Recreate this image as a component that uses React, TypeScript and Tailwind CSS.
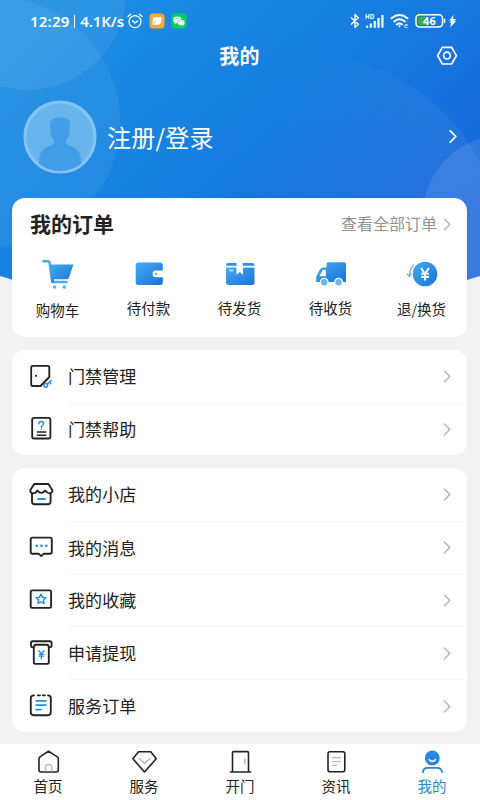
import type { ReactNode } from "react";

const FONT = "font-['Noto_Sans_CJK_SC',sans-serif]";

function Chevron({ className, w = 1.5 }: { className: string; w?: number }) {
  return (
    <svg viewBox="0 0 8 14" className={className} fill="none" stroke="currentColor" strokeWidth={w} strokeLinecap="round" strokeLinejoin="round">
      <path d="M1 1l6 6-6 6" />
    </svg>
  );
}

function HeaderBackground() {
  return (
    <svg viewBox="0 0 480 300" className="absolute left-0 top-0 h-[300px] w-[480px]">
      <defs>
        <linearGradient id="sky" gradientUnits="userSpaceOnUse" x1="60" y1="0" x2="350" y2="330">
          <stop offset="0" stopColor="#1c8fe4" />
          <stop offset="0.45" stopColor="#1680e0" />
          <stop offset="1" stopColor="#1763d9" />
        </linearGradient>
        <clipPath id="arc"><path d="M0 0H480V276Q240 352 0 276Z" /></clipPath>
        <linearGradient id="orb" gradientUnits="userSpaceOnUse" x1="270" y1="110" x2="450" y2="180">
          <stop offset="0" stopColor="#fff" stopOpacity="0" />
          <stop offset="1" stopColor="#fff" stopOpacity="0.06" />
        </linearGradient>
      </defs>
      <g clipPath="url(#arc)">
        <rect width="480" height="300" fill="url(#sky)" />
        <circle cx="28" cy="-8" r="98" fill="#fff" fillOpacity="0.07" />
        <circle cx="-5" cy="122" r="125" fill="#fff" fillOpacity="0.06" />
        <circle cx="300" cy="256" r="203" fill="url(#orb)" />
        <circle cx="502" cy="215" r="79" fill="#fff" fillOpacity="0.1" />
      </g>
    </svg>
  );
}

function StatusBar() {
  return (
    <div className="flex h-[42px] items-center pl-[30px] pr-[23px] text-white">
      <div className="flex w-[94px] items-center whitespace-nowrap font-['Noto_Sans',sans-serif] text-[15px] font-semibold">
        <span className="w-[39px] tracking-[0.2px]">12:29</span>
        <span className="ml-[5px] h-[13px] w-[1.5px] bg-white" />
        <span className="ml-[5px] tracking-[-0.1px]">4.1K/s</span>
      </div>
      <svg viewBox="0 0 16 16" className="ml-[3px] h-4 w-4" fill="none" stroke="currentColor" strokeWidth="1.3" strokeLinecap="round" strokeLinejoin="round">
        <circle cx="8" cy="8.6" r="6" />
        <path d="M1 3.6L3.6 1.2M15 3.6L12.4 1.2M5.6 7.8L8 10l2.6-2" />
      </svg>
      <svg viewBox="0 0 16 16" className="ml-[6px] h-4 w-4">
        <rect x="0.5" y="0.5" width="15" height="15" rx="3.5" fill="#fba734" />
        <path d="M4 4.3h8.7L12.2 9.5l-2.4 2.2H3.4z" fill="#fff" />
        <path d="M3.6 11.4L6.8 7.8" stroke="#fbb95a" strokeWidth="1" />
      </svg>
      <svg viewBox="0 0 16 16" className="ml-[6px] h-4 w-4">
        <rect x="0.5" y="0.5" width="15" height="15" rx="3.5" fill="#08cd63" />
        <ellipse cx="6.3" cy="6.8" rx="4.1" ry="3.4" fill="#fff" />
        <ellipse cx="10.3" cy="9.5" rx="3.7" ry="3" fill="#fff" stroke="#08cd63" strokeWidth="0.6" />
        <path d="M3.5 11l.5-2 2 1zM12 13l-.5-1.5 1.5-.4z" fill="#fff" />
        <g fill="#08cd63">
          <circle cx="5" cy="5.8" r=".6" /><circle cx="7.7" cy="5.8" r=".6" />
          <circle cx="9.2" cy="8.8" r=".5" /><circle cx="11.5" cy="8.8" r=".5" />
        </g>
      </svg>
      <div className="ml-auto flex items-center">
        <svg viewBox="0 0 10 16" className="h-4 w-[10px]" fill="none" stroke="currentColor" strokeWidth="1.4" strokeLinejoin="round">
          <path d="M1 4.4l7.4 6.8L5 14.5v-13l3.4 3.2L1 11.6" />
        </svg>
        <svg viewBox="0 0 20 20" className="ml-[5px] h-5 w-5 overflow-visible" fill="currentColor">
          <text x="0" y="7.6" fontSize="6.2" fontWeight="700" fontFamily="Noto Sans">HD</text>
          <rect x="1" y="14.7" width="2.2" height="2" /><rect x="4.7" y="12.5" width="2.2" height="4.2" />
          <rect x="8.6" y="10" width="2.2" height="6.7" /><rect x="12.4" y="7" width="2.2" height="9.7" />
          <rect x="16.3" y="4" width="2.2" height="12.7" />
        </svg>
        <svg viewBox="0 0 20 16" className="ml-[5px] h-4 w-5" fill="none" stroke="currentColor" strokeWidth="1.9" strokeLinecap="round">
          <path d="M1.5 5.2Q9.5-1.3 17.5 5.2M4.2 8.4Q9.5 4.2 14.8 8.4M6.8 11.5Q9.5 9.5 12 11.5" />
          <circle cx="9.5" cy="13.2" r="1" fill="currentColor" stroke="none" />
          <text x="14" y="15.2" fontSize="7" fill="currentColor" stroke="none" fontFamily="Noto Sans">e</text>
        </svg>
        <svg viewBox="0 0 32 16" className="ml-[5px] h-4 w-8">
          <rect x="1" y="1.8" width="26.5" height="12.2" rx="3.5" fill="none" stroke="#fff" strokeWidth="1.5" />
          <path d="M5 3.8H11.5V12H5Q3.2 12 3.2 10.2V5.6Q3.2 3.8 5 3.8Z" fill="#3fae3a" />
          <rect x="28.8" y="5.5" width="1.5" height="4.8" rx=".7" fill="#fff" />
          <text x="14.4" y="12" fontSize="11" fontWeight="700" textAnchor="middle" fill="#fff" fontFamily="Noto Sans">46</text>
        </svg>
        <svg viewBox="0 0 9 14" className="ml-[1px] h-[14px] w-[9px]" fill="currentColor">
          <path d="M5.8.8L1 6.6h2.8L.9 8.6h2.4L2.2 13.2 8.2 7.2H5.5L8.4 5H5z" />
        </svg>
      </div>
    </div>
  );
}

function BlueGradient({ id }: { id: string }) {
  return (
    <defs>
      <linearGradient id={id} x1="0" y1="0" x2="1" y2="1">
        <stop offset="0" stopColor="#46aaf5" />
        <stop offset="1" stopColor="#1a73d4" />
      </linearGradient>
    </defs>
  );
}

const orders: { label: string; id: string; shift?: string; art: ReactNode }[] = [
  {
    label: "购物车", id: "cart", shift: "pt-[2px]",
    art: (
      <>
        <path d="M1.3 3.2H6.2Q7.3 3.2 7.5 4.3L10.2 24H24.5" fill="none" stroke="#4ba9ef" strokeWidth="2.4" strokeLinecap="round" strokeLinejoin="round" />
        <path d="M7 6.5H31.4L27 19.5Q26.4 21.2 25 21.2H12V25H9.6Z" fill="url(#cart)" />
        <circle cx="12.5" cy="29" r="1.8" fill="#5ab2f0" /><circle cx="22.3" cy="29" r="1.8" fill="#5ab2f0" />
      </>
    ),
  },
  {
    label: "待付款", id: "wallet",
    art: (
      <>
        <path d="M5.5 4.5H27Q29.8 4.5 29.8 7V12.6H23Q19.6 12.6 19.6 15.9T23 19.2H29.8V24.5Q29.8 27 27 27H5.5Q2.7 27 2.7 24.3V7.2Q2.7 4.5 5.5 4.5Z" fill="url(#wallet)" />
        <circle cx="23.2" cy="15.9" r="1.2" fill="#5aaff0" />
      </>
    ),
  },
  {
    label: "待发货", id: "box",
    art: (
      <>
        <path d="M3.5 5H12.6V7.8H2Q2 5 3.5 5ZM18.8 5H29Q30.5 5 30.5 7.8H18.8Z" fill="#2f8fe6" />
        <path d="M2 9.6H12.4V16.8L15.8 14 19 16.8V9.6H30.5V24.5Q30.5 27 28 27H4.5Q2 27 2 24.5Z" fill="url(#box)" />
        <path d="M5 12.5H9.5" stroke="#c8e5fc" strokeWidth="1.6" />
      </>
    ),
  },
  {
    label: "待收货", id: "truck",
    art: (
      <>
        <path d="M13.5 4.2H29.4Q31 4.2 31 5.8V24H1.2V18.8L5 11.4Q6 9.6 8 9.6H11.5V6Q11.5 4.2 13.5 4.2Z" fill="url(#truck)" />
        <path d="M7.8 11.8H10.9V18.3H4.4Z" fill="#fff" />
        <circle cx="9.2" cy="24.3" r="4.5" fill="#fff" /><circle cx="23.6" cy="24.3" r="4.5" fill="#fff" />
        <circle cx="9.2" cy="24.3" r="3.2" fill="#6eb7ef" /><circle cx="23.6" cy="24.3" r="3.2" fill="#6eb7ef" />
      </>
    ),
  },
  {
    label: "退/换货", id: "refund", shift: "pt-[1px]",
    art: (
      <>
        <circle cx="19" cy="16" r="12.3" fill="url(#refund)" />
        <path d="M15 10L19 15.8l4-5.8M19 15.8V22.6M15.1 15.8H22.9M15.1 19H22.9" fill="none" stroke="#fff" strokeWidth="1.9" />
        <path d="M7.9 6.8Q3.2 11.3 3.6 18.4M1 15.6L3.6 18.8l1.6-3.8" fill="none" stroke="#75b9ee" strokeWidth="1.3" />
      </>
    ),
  },
];

const INK = "#222";
const BLUE = "#2490dc";

type Item = { label: string; icon: ReactNode };

const doorItems: Item[] = [
  {
    label: "门禁管理",
    icon: (
      <>
        <path d="M5 2.9H19.5Q21.3 2.9 21.3 4.7V14L12.5 23H5Q3.2 23 3.2 21.2V4.7Q3.2 2.9 5 2.9Z" />
        <circle cx="8" cy="12.8" r="1.1" fill={INK} stroke="none" />
        <g stroke={BLUE} strokeWidth="1.5"><circle cx="17.8" cy="22.3" r="1.9" /><path d="M19.2 21L23.5 17.2M21.4 19.2l1.4 1.5" /></g>
      </>
    ),
  },
  {
    label: "门禁帮助",
    icon: (
      <>
        <rect x="4.2" y="2.9" width="18.2" height="20.6" rx="1.8" />
        <path d="M10.8 8.9Q10.8 6.5 13.2 6.5T15.6 8.7Q15.6 9.9 13.4 11.4V12.4M13.4 13.9V14.2" stroke={BLUE} strokeWidth="1.4" />
        <path d="M9.3 17H17.8M9.3 20.2H17.8" strokeWidth="1.5" />
      </>
    ),
  },
];

const mineItems: Item[] = [
  {
    label: "我的小店",
    icon: (
      <>
        <path d="M6.2 3H20.4L24.4 9.2Q24.2 12.4 21.4 12.4Q19 12.4 17.3 9.6Q15.8 11.8 13.3 11.8T9.3 9.6Q7.7 12.4 5.2 12.4Q2.4 12.4 2.2 9.2Z" />
        <path d="M4 12.8V20.4Q4 23.2 6.8 23.2H19.8Q22.6 23.2 22.6 20.4V12.8" />
        <path d="M10.2 18H17" stroke={BLUE} />
      </>
    ),
  },
  {
    label: "我的消息",
    icon: (
      <>
        <path d="M4.5 3.6H22Q23.8 3.6 23.8 5.4V18Q23.8 19.7 22 19.7H15.8L13.2 22.2 10.6 19.7H4.5Q2.7 19.7 2.7 18V5.4Q2.7 3.6 4.5 3.6Z" />
        <g fill={BLUE} stroke="none"><circle cx="8.8" cy="11.8" r="1.35" /><circle cx="13.5" cy="11.8" r="1.35" /><circle cx="18.2" cy="11.8" r="1.35" /></g>
      </>
    ),
  },
  {
    label: "我的收藏",
    icon: (
      <>
        <rect x="2.7" y="4.3" width="20.4" height="17.6" rx="1.6" />
        <path d="M13 8.1l1.5 3.1 3.3.5-2.4 2.3.6 3.4-3-1.6-3 1.6.6-3.4-2.4-2.3 3.3-.5z" stroke={BLUE} strokeWidth="1.5" />
      </>
    ),
  },
  {
    label: "申请提现",
    icon: (
      <>
        <path d="M5.5 8.4H4.8Q3 8.4 3 6.6V3.8Q3 2.2 4.8 2.2H21.9Q23.6 2.2 23.6 3.8V6.6Q23.6 8.4 21.8 8.4H21" />
        <path d="M5.8 8.6Q5.8 5.7 8 5.7H18.8Q20.8 5.7 20.8 8.6V23.2Q20.8 24.8 19.2 24.8H7.4Q5.8 24.8 5.8 23.2Z" />
        <path d="M10.8 11.6L13.4 15 16 11.6M13.4 15V19.8M11.2 15.3H15.6M11.2 17.2H15.6" stroke={BLUE} strokeWidth="1.3" />
      </>
    ),
  },
  {
    label: "服务订单",
    icon: (
      <>
        <path d="M6 3.3Q2.8 3.3 2.8 6V20.3Q2.8 23.2 5.6 23.2H20Q22.8 23.2 22.8 20.3V6Q22.8 3.3 20 3.3M9.8 3.3H12M14.8 3.3H17" />
        <path d="M8.2 8.8H17.8M8.2 13.1H17.8M8.2 17.6H12.8" stroke={BLUE} />
      </>
    ),
  },
];

function MenuCard({ items, className }: { items: Item[]; className: string }) {
  return (
    <div className={`flex flex-col rounded-[13px] bg-white ${className}`}>
      {items.map((it, i) => (
        <div key={it.label} className="flex flex-1 items-center pl-4">
          <svg viewBox="0 0 27 27" className="h-[27px] w-[27px] shrink-0" fill="none" stroke={INK} strokeWidth="1.85" strokeLinecap="round" strokeLinejoin="round">
            {it.icon}
          </svg>
          <div className={`ml-[13px] flex flex-1 items-center justify-between self-stretch pr-4 ${i ? "border-t border-[#f5f5f5]" : ""}`}>
            <span className="text-[17px] leading-6 tracking-[0.1px] text-[#222]">{it.label}</span>
            <Chevron className="h-[13px] w-2 text-[#aaa]" w={1.3} />
          </div>
        </div>
      ))}
    </div>
  );
}

const tabs: Item[] = [
  { label: "首页", icon: <><path d="M12.5 2.2L21.7 8.2Q22.3 8.6 22.3 9.4V21Q22.3 23 20.3 23H5Q3 23 3 21V9.4Q3 8.6 3.7 8.2Z" /><path d="M9.3 22V18.5Q9.3 15.5 12.6 15.5T15.8 18.5V22" stroke="#bbb" strokeWidth="1.4" /></> },
  { label: "服务", icon: <><path d="M6.5 2.7H18.7L24.2 9.8 12.5 23 .9 9.8Z" /><path d="M7.3 9.5L12.6 14.3 18 9.5" stroke="#bbb" /></> },
  { label: "开门", icon: <><path d="M4.5 23V3.8Q4.5 2.6 5.7 2.6H19.3Q20.5 2.6 20.5 3.8V23M2.5 23H22.5" /><path d="M16.8 10V15" stroke="#aaa" strokeWidth="1.3" /></> },
  { label: "资讯", icon: <><rect x="4" y="2.7" width="16.8" height="20" rx="2" /><path d="M8.5 8.7H16.2M8.5 12.5H16.2M8.5 16.4H12.4" stroke="#b5b5b5" strokeWidth="1.2" /></> },
  { label: "我的", icon: <><circle cx="12.3" cy="9" r="7.4" fill="#2586e3" stroke="none" /><path d="M9.3 10.7Q12.3 14 15.3 10.7" stroke="#fff" /><path d="M3 23.2Q3.2 18.8 7.5 18.8H17.2Q21.6 18.8 22 23.2" stroke="#2586e3" strokeWidth="1.8" /></> },
];

export default function App() {
  return (
    <div className={`relative flex h-[800px] w-[480px] flex-col overflow-hidden bg-[#f2f2f2] ${FONT}`}>
      <HeaderBackground />
      <div className="relative flex flex-1 flex-col">
        <StatusBar />
        <div className="grid h-7 grid-cols-[1fr_auto_1fr] items-center pr-[22px] text-white">
          <span className="col-start-2 ml-[21px] text-[20px] font-bold leading-7 tracking-[0.3px]">我的</span>
          <svg viewBox="0 0 22 20" className="h-5 w-[22px] justify-self-end" fill="none" stroke="currentColor" strokeWidth="1.7" strokeLinejoin="round">
            <path d="M6.4 1.3H15.6L20.4 9.6 15.6 18H6.4L1.6 9.6Z" /><circle cx="11" cy="9.6" r="3.4" />
          </svg>
        </div>
        <div className="flex h-[128px] items-center pl-[23px] pr-[23px] pt-[5px] text-white">
          <svg viewBox="0 0 74 74" className="h-[74px] w-[74px]">
            <circle cx="37" cy="37" r="35" fill="#68b4ec" stroke="#84c4f3" strokeWidth="3.2" />
            <path d="M37 17.5C43.5 17.3 47.3 19.5 47 24L46.6 32Q46.2 37 43 40Q42 43.5 46 45.5L51 47.6Q58.5 51.5 58.4 63.5Q49 71 37 71T15.7 63.5Q15.5 51.5 23 47.6L28 45.5Q32.5 43.5 31 40Q27.8 37 27.4 32L27 24Q27 17.5 37 17.5Z" fill="#429ee6" />
          </svg>
          <span className="ml-[10px] text-[24px] leading-8 tracking-[0.3px]">注册/登录</span>
          <Chevron className="ml-auto h-[13px] w-2" w={1.9} />
        </div>

        <div className="ml-3 mr-[13px] h-[139px] rounded-[13px] bg-white">
          <div className="flex h-[52px] items-center pl-[18px] pr-4">
            <span className="-mt-[2px] text-[21px] font-bold leading-7 text-[#222]">我的订单</span>
            <span className="-mt-[2px] ml-auto text-[16px] text-[#929292]">查看全部订单</span>
            <Chevron className="ml-[6px] h-[13px] w-2 text-[#aaa]" w={1.3} />
          </div>
          <div className="grid grid-cols-5 pt-[8px]">
            {orders.map((o) => (
              <div key={o.id} className="flex flex-col items-center">
                <svg viewBox="0 0 32 32" className="h-8 w-8"><BlueGradient id={o.id} />{o.art}</svg>
                <span className={`mt-[7px] text-[14.5px] leading-[22px] text-[#222] ${o.shift ?? ""}`}>{o.label}</span>
              </div>
            ))}
          </div>
        </div>

        <MenuCard items={doorItems} className="ml-3 mr-[13px] mt-[13px] h-[105px]" />
        <MenuCard items={mineItems} className="ml-3 mr-[13px] mt-[13px] h-[264px]" />

        <div className="mt-auto grid h-14 grid-cols-5 bg-white">
          {tabs.map((t, i) => (
            <div key={t.label} className="flex flex-col items-center pt-[5px]">
              <svg viewBox="0 0 25 25" className="h-[25px] w-[25px]" fill="none" stroke={INK} strokeWidth="1.6" strokeLinecap="round" strokeLinejoin="round">{t.icon}</svg>
              <span className={`mt-[2px] text-[14.5px] leading-5 ${i === 4 ? "text-[#2588cf]" : "text-[#222]"}`}>{t.label}</span>
            </div>
          ))}
        </div>
      </div>
    </div>
  );
}
